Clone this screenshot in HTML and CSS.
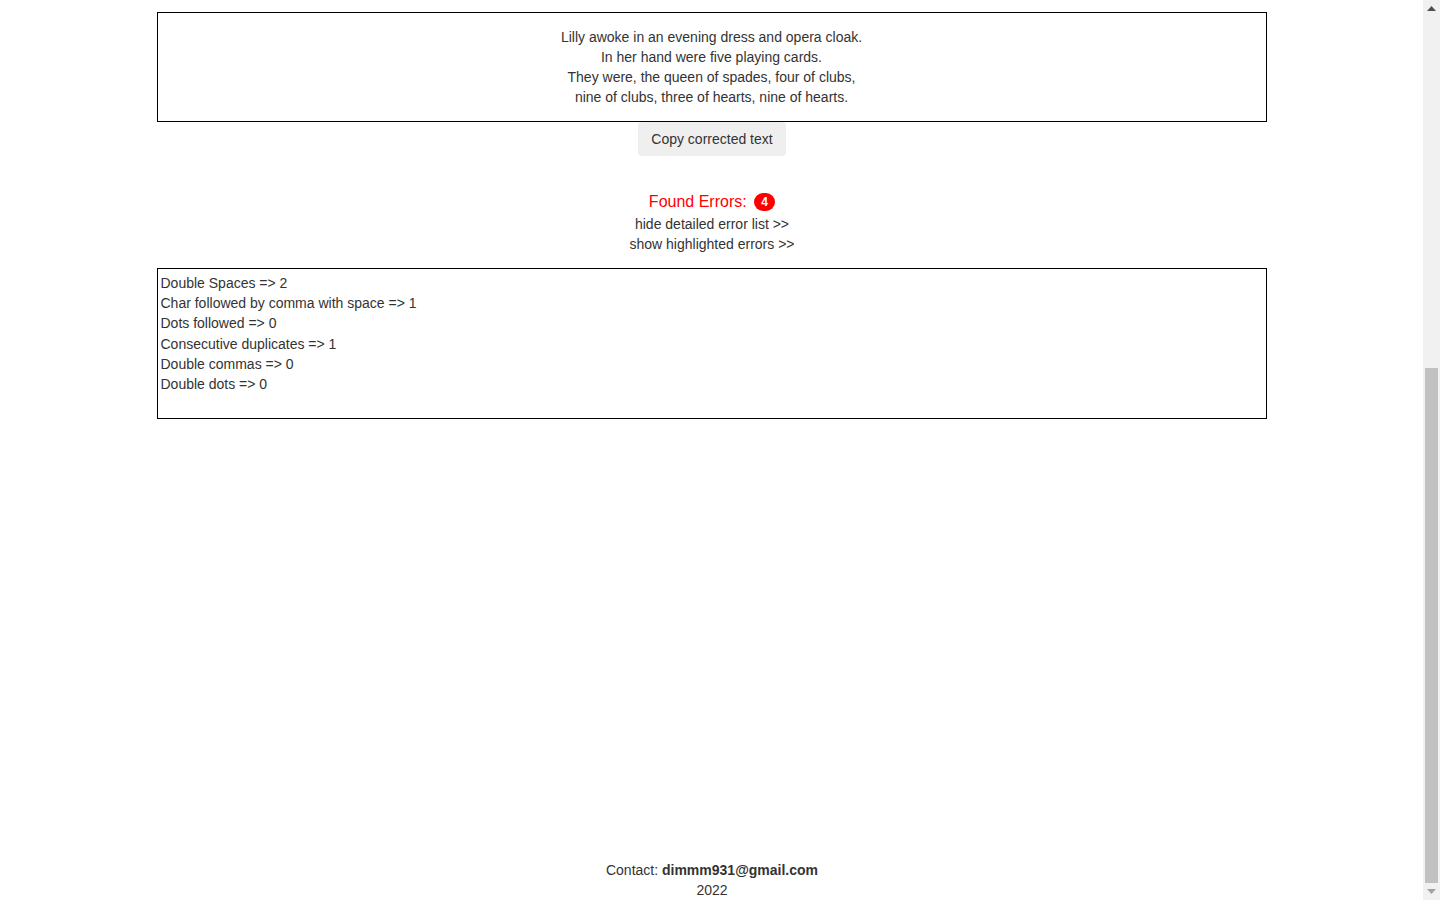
FILE: index.html
```html
<!DOCTYPE html>
<html lang="en">
<head>
<meta charset="utf-8">
<title>Text checker</title>
<link rel="stylesheet" href="styles.css">
</head>
<body>
<div class="viewport">
  <div class="page">
    <main class="container">
      <div class="text-box">
        Lilly awoke in an evening dress and opera cloak.<br>
        In her hand were five playing cards.<br>
        They were, the queen of spades, four of clubs,<br>
        nine of clubs, three of hearts, nine of hearts.
      </div>
      <div class="copy-row">
        <button class="btn-copy" type="button">Copy corrected text</button>
      </div>
      <div class="errors-summary">
        <div class="found">Found Errors: <span class="badge">4</span></div>
        <div class="toggle">hide detailed error list &gt;&gt;</div>
        <div class="toggle">show highlighted errors &gt;&gt;</div>
      </div>
      <div class="error-list">
        <div>Double Spaces =&gt; 2</div>
        <div>Char followed by comma with space =&gt; 1</div>
        <div>Dots followed =&gt; 0</div>
        <div>Consecutive duplicates =&gt; 1</div>
        <div>Double commas =&gt; 0</div>
        <div>Double dots =&gt; 0</div>
      </div>
    </main>
    <footer class="footer">
      <div>Contact: <strong>dimmm931@gmail.com</strong></div>
      <div>2022</div>
    </footer>
  </div>
  <div class="scrollbar" aria-hidden="true">
    <div class="sb-btn">
      <svg width="9" height="5" viewBox="0 0 9 5"><path d="M4.5 0 L9 5 L0 5 Z" fill="#505050"/></svg>
    </div>
    <div class="sb-track">
      <div class="sb-thumb"></div>
    </div>
    <div class="sb-btn">
      <svg width="9" height="5" viewBox="0 0 9 5"><path d="M0 0 L9 0 L4.5 5 Z" fill="#a3a3a3"/></svg>
    </div>
  </div>
</div>
</body>
</html>
```
FILE: styles.css
```css
* { box-sizing: border-box; }

html, body {
  margin: 0;
  padding: 0;
  height: 900px;
  overflow: hidden;
  background: #fff;
}

body {
  font-family: "Liberation Sans", Arial, Helvetica, sans-serif;
  font-size: 14px;
  line-height: 20px;
  color: #333;
}

.viewport {
  display: flex;
  height: 900px;
}

.page {
  flex: 1;
  display: flex;
  flex-direction: column;
  min-width: 0;
}

.container {
  width: 1110px;
  margin: 0 auto;
  padding-top: 12px;
  flex: 1;
}

.text-box {
  border: 1px solid #000;
  text-align: center;
  padding: 14px 10px;
  height: 110px;
}

.copy-row {
  display: flex;
  justify-content: center;
  margin-left: 1px;
}

.btn-copy {
  font-family: inherit;
  font-size: 14px;
  line-height: 20px;
  color: #333;
  background: #efefef;
  border: 0;
  border-radius: 4px;
  padding: 7px 13px;
  height: 34px;
  cursor: pointer;
}

.errors-summary {
  text-align: center;
  margin-top: 35px;
  margin-bottom: 14px;
  margin-left: 1px;
}

.found {
  color: #f00;
  font-size: 16px;
  line-height: 22px;
  margin-bottom: 1px;
}

.badge {
  display: inline-block;
  vertical-align: middle;
  min-width: 21px;
  height: 18px;
  padding: 0 6px;
  margin-left: 3px;
  font-size: 12px;
  font-weight: bold;
  line-height: 18px;
  color: #fff;
  background: #f00;
  border-radius: 10px;
  text-align: center;
  position: relative;
  top: -1px;
}

.toggle {
  line-height: 20px;
  cursor: pointer;
}

.error-list {
  border: 1px solid #000;
  height: 151px;
  padding: 4px 3px;
  line-height: 20.2px;
}

.footer {
  text-align: center;
  height: 50px;
  padding-top: 10px;
  margin-left: 1px;
}

.footer strong {
  font-weight: bold;
}

.scrollbar {
  width: 17px;
  flex: 0 0 17px;
  background: #f1f1f1;
  display: flex;
  flex-direction: column;
}

.sb-btn {
  height: 17px;
  display: flex;
  align-items: center;
  justify-content: center;
}

.sb-track {
  flex: 1;
  display: flex;
  flex-direction: column;
  justify-content: flex-end;
  padding: 0 2px;
}

.sb-thumb {
  height: 515px;
  background: #c1c1c1;
}
```
